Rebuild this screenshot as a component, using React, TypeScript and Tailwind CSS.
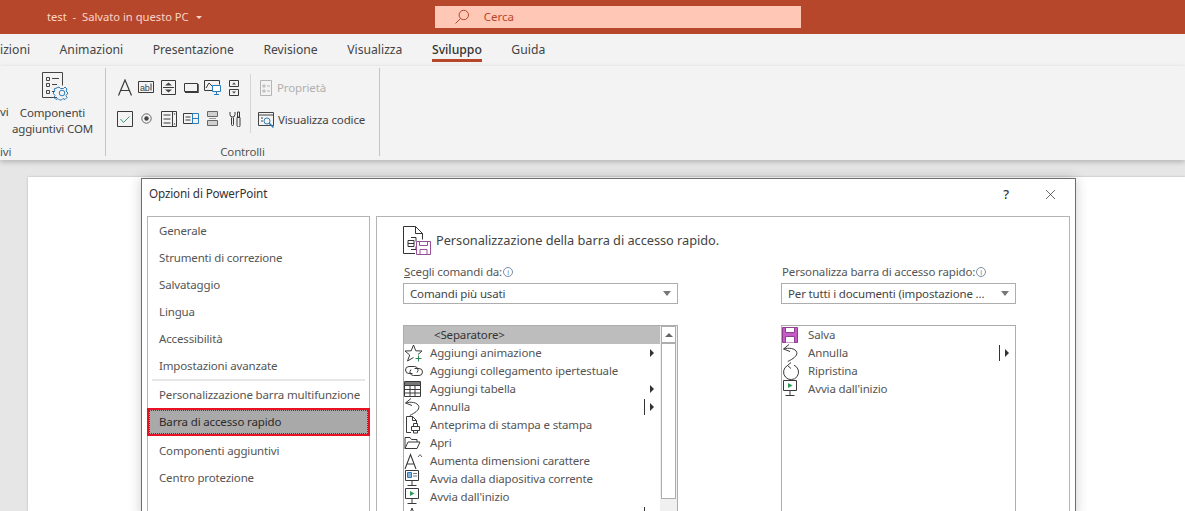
import type { ReactNode } from "react";
import { X } from "lucide-react";

const tabs = ["izioni", "Animazioni", "Presentazione", "Revisione", "Visualizza", "Sviluppo", "Guida"];

const navTop = ["Generale", "Strumenti di correzione", "Salvataggio", "Lingua", "Accessibilità", "Impostazioni avanzate"];

function Svg({ w, h, children }: { w: number; h: number; children: ReactNode }) {
  return (
    <svg width={w} height={h} viewBox={`0 0 ${w} ${h}`} fill="none" stroke="#3a3a3a" strokeWidth="1" className="block shrink-0">
      {children}
    </svg>
  );
}

function SaveIcon({ filled }: { filled?: boolean }) {
  return (
    <Svg w={16} h={16}>
      <path d="M.5.5h15v15H.5z" fill={filled ? "#c55cc5" : "#fff"} stroke="#8e3f8e" />
      <path d="M3.500.5h9v5h-9zM3.500 15.500v-6h9v6" fill="#fff" stroke="#8e3f8e" />
    </Svg>
  );
}

function StarIcon() {
  return (
    <Svg w={20} h={18}>
      <path d="M14 10.500L18 7l-6.200-.2L9.500 1 7.200 6.800 1 7l4.700 4L3.500 17l6-3.500" />
      <path d="M14.500 11.500v6M11.500 14.500h6" stroke="#2e8b57" />
    </Svg>
  );
}

function LinkIcon() {
  return (
    <Svg w={20} h={18}>
      <path d="M8.500 11.500H5a3.500 3.500 0 0 1 0-7h5.500a3.500 3.500 0 0 1 2.500 6" />
      <path d="M10.500 6.500H15a3.500 3.500 0 0 1 0 7H9.500a3.500 3.500 0 0 1-2.500-6" />
    </Svg>
  );
}

function TableIcon() {
  return (
    <Svg w={18} h={16}>
      <path d="M.5.500h16v15H.5z" />
      <path d="M1 1h15v3H1z" fill="#777" stroke="none" />
      <path d="M.5 4.500h16M.5 8.500h16M.5 12h16M6 4v11M11 4v11" />
    </Svg>
  );
}

function UndoIcon() {
  return (
    <Svg w={17} h={18}>
      <path d="M7 .5L1.500 5 8 7.500" />
      <path d="M1.800 5c4.500-1.500 12-.8 13 3.500.7 3.500-4 6.500-9 9" />
    </Svg>
  );
}

function RedoIcon() {
  return (
    <Svg w={17} h={18}>
      <path d="M9 .5L5.500 3.500 9 6.500" />
      <path d="M5.500 3.500a7.500 7.500 0 1 0 6.500-.3" />
    </Svg>
  );
}

function PrintIcon() {
  return (
    <Svg w={17} h={18}>
      <path d="M7 16.500H2.500V.5h6l4 4v3M8.500.5v4h4" />
      <path d="M7.500 10.500h8v4h-8zM9.500 10.500v-3h4v3M9.500 14.500v2.500h4v-2.500" fill="#fff" />
    </Svg>
  );
}

function FolderIcon() {
  return (
    <Svg w={17} h={16}>
      <path d="M1 13.500V2.500h5l1.500 2H13v2.500" />
      <path d="M1 13.500L4 7h12l-3 6.500z" />
    </Svg>
  );
}

function GrowIcon() {
  return (
    <Svg w={20} h={18}>
      <path d="M1 17L6.500 2.500 12 17M3 12h7" strokeWidth="1.100" />
      <path d="M14 5l2-2.500L18 5" stroke="#666" />
    </Svg>
  );
}

function SlideIcon({ from }: { from?: boolean }) {
  return (
    <Svg w={17} h={18}>
      <path d="M1.500.500h13v10h-13z" />
      <path d="M8 10.500v5M3.500 15.500h9" />
      {from ? (
        <path d="M6 3l4.500 2.500L6 8z" fill="#2e9b57" stroke="none" />
      ) : (
        <>
          <path d="M3.500 2.500h4v5h-4z" fill="#7fb3dc" stroke="#2b7cbb" />
          <path d="M9 3.500h4M9 6h4" stroke="#777" />
        </>
      )}
    </Svg>
  );
}

function FontIcon() {
  return (
    <Svg w={17} h={18}>
      <path d="M2 17L8 2l6 15M4 12h8" />
    </Svg>
  );
}

function Marker({ line, arrow }: { line?: boolean; arrow?: boolean }) {
  return (
    <div className="ml-auto flex h-[18px] w-[16px] shrink-0 items-center">
      <span className={line ? "h-[16px] w-px bg-[#333]" : "h-[16px] w-px"} />
      {arrow && <span className="ml-[5px] h-0 w-0 border-y-[4px] border-l-[4px] border-y-transparent border-l-[#333]" />}
    </div>
  );
}

function Row({ icon, label, line, arrow }: { icon: ReactNode; label: string; line?: boolean; arrow?: boolean }) {
  return (
    <div className="flex h-[18px] items-center text-[#555]">
      <div className="flex h-[18px] w-[26px] shrink-0 items-center overflow-hidden">{icon}</div>
      <span className="whitespace-nowrap">{label}</span>
      {(line || arrow) && <Marker line={line} arrow={arrow} />}
    </div>
  );
}

function Info() {
  return (
    <span className="ml-px inline-flex h-[10px] w-[10px] items-center justify-center rounded-full border border-[#7a8ea3] text-[7px] leading-none tracking-normal text-[#5a7fa3]">
      i
    </span>
  );
}

function Arrow() {
  return <span className="ml-auto h-0 w-0 border-x-[4px] border-t-[5px] border-x-transparent border-t-[#777]" />;
}

function ControlIcons() {
  return (
    <div className="grid grid-cols-[22px_21px_23px_22px_21px_22px] grid-rows-[31px_31px] items-center justify-items-center">
      <Svg w={16} h={17}>
        <path d="M1.500 16.500L8 1l6.500 15.500M4 11.500h8" strokeWidth="1.200" />
      </Svg>
      <Svg w={17} h={13}>
        <path d="M.5.500h15v11H.5z" />
        <text x="2" y="9.500" fontSize="9" fill="#444" stroke="none" fontFamily="Liberation Sans, sans-serif">ab</text>
        <path d="M13 2.500v7" />
      </Svg>
      <Svg w={16} h={16}>
        <path d="M.5.500h14v14H.5zM2 7.500h11" />
        <path d="M4 5.500l3.500-3 3.500 3zM4 9.500l3.500 3 3.500-3z" fill="#444" stroke="none" />
      </Svg>
      <Svg w={15} h={10}>
        <path d="M.5.500h13v8H.5z" />
        <path d="M14 1v8.500H1" strokeWidth="1.500" />
      </Svg>
      <Svg w={18} h={16}>
        <path d="M9 10.500H.5V.5h15v4" />
        <path d="M2 8l3-5 3 3" />
        <path d="M8.500 5.500h8v6h-8zM12.500 11.500v3M10 14.500h5" stroke="#2b7cbb" fill="#fff" />
      </Svg>
      <Svg w={11} h={16}>
        <path d="M.5.500h9v6h-9zM.5 9.500h9v6h-9z" />
        <path d="M3 4.500l2-2 2 2zM3 11.500l2 2 2-2z" fill="#444" stroke="none" />
      </Svg>
      <Svg w={16} h={16}>
        <path d="M.5.500h15v15H.5z" />
        <path d="M3.500 8l3 3.500 6-6" stroke="#3d9c6b" />
      </Svg>
      <Svg w={11} h={11}>
        <circle cx="5.500" cy="5.500" r="4.700" stroke="#666" />
        <circle cx="5.500" cy="5.500" r="2.200" fill="#444" stroke="none" />
      </Svg>
      <Svg w={16} h={16}>
        <path d="M.5.500h15v15H.5zM11.500.5v15M2.500 4h7M2.500 8h7M2.500 12h7" />
        <path d="M12.500 2.500h2l-1 1.500zM12.500 13.500h2l-1-1.500z" fill="#444" stroke="none" />
      </Svg>
      <Svg w={16} h={11}>
        <path d="M.5.500h9v10H.5zM2.500 4h5M2.500 7h5" />
        <path d="M9.500.5h6v10h-6zM9.500 5.500h6" stroke="#2b7cbb" />
      </Svg>
      <Svg w={12} h={15}>
        <path d="M.5.500h10v5H.5z" fill="#d0d0d0" stroke="#666" />
        <path d="M.5 9.500h10v5H.5z" fill="#d0d0d0" stroke="#666" />
        <path d="M2 7.500h7" stroke="#999" />
      </Svg>
      <Svg w={13} h={16}>
        <path d="M3.500 6.500v7a1 1 0 0 0 2 0v-7M2 1v2.500a2.500 2.500 0 0 0 5 0V1" />
        <path d="M9.500 1h2v5h-2zM9 6.500h3v8a1.500 1.500 0 0 1-3 0z" />
      </Svg>
    </div>
  );
}

function Group({ className, label, children }: { className: string; label: ReactNode; children: ReactNode }) {
  return (
    <div className={`${className} flex h-[88px] shrink-0 flex-col border-r border-[#c4c4c4]`}>
      <div className="h-[79px]">{children}</div>
      <div className="text-center leading-[9px] text-[#555]">{label}</div>
    </div>
  );
}

export default function App() {
  return (
    <div className="relative flex h-[511px] w-[1185px] flex-col overflow-hidden bg-[#e6e6e6] font-['Noto_Sans',sans-serif] text-[11.5px] tracking-[-0.15px]">
      {/* title bar */}
      <div className="flex h-[34px] shrink-0 items-center bg-[#b7472a] text-[#fbd5c8]">
        <span className="ml-[47px] text-[11.2px] tracking-normal">test&nbsp; -&nbsp; Salvato in questo PC</span>
        <span className="ml-[7px] h-0 w-0 border-x-[3px] border-t-[3px] border-x-transparent border-t-[#fbd5c8]" />
        <div className="ml-[233px] flex h-[22px] w-[366px] items-center bg-[#ffc7b5] text-[#b7472a]">
          <svg width="16" height="16" viewBox="0 0 16 16" fill="none" stroke="#b7472a" strokeWidth="1" className="ml-[19px]">
            <circle cx="9.800" cy="6" r="4.700" />
            <path d="M6.500 9.500L1.500 14.500" />
          </svg>
          <span className="ml-[14px] tracking-normal">Cerca</span>
        </div>
      </div>

      {/* tabs */}
      <div className="flex h-[32px] shrink-0 items-start gap-[29.500px] bg-[#f3f3f3] pt-[7px] text-[12.2px] tracking-normal text-[#444]">
        {tabs.map((t) => (
          <div key={t} className={t === "Sviluppo" ? "border-b-[3px] border-[#b7472a] font-medium text-[#333]" : ""}>
            {t}
          </div>
        ))}
      </div>

      {/* ribbon */}
      <div className="flex h-[94px] shrink-0 items-start bg-[#f3f3f3] pt-[2px] shadow-[0_2px_5px_rgba(0,0,0,0.22)]">
        <Group className="w-[106px]" label={<span className="-ml-[4px] block text-left">tivi</span>}>
          <div className="relative flex flex-col items-center pt-[3px] text-center leading-[16px] text-[#444]">
            <svg width="30" height="30" viewBox="0 0 30 30" fill="none" stroke="#444" className="ml-[7px]">
              <path d="M16 26.500H1.500V1.500h20v13" />
              <path d="M5.500 6.500h3v3h-3zM5.500 12.500h3v3h-3zM5.500 19.500h3v3h-3zM11 7.500h7M11 13.500h5M11 20.500h3" />
              <circle cx="21" cy="22" r="2.800" stroke="#2b7cbb" />
              <path d="M18 16l1.500 1.500h3L24 16l2 2-1 2 2 2-2 2.500 1 2-2 2-2-1-1.500 1.500h-2l-1.500-1.500-2 1-2-2 1-2-2-2.500 2-2-1-2z" stroke="#2b7cbb" fill="none" />
            </svg>
            <span className="absolute left-0 top-[36px]">vi</span>
            <span className="mt-[4px] whitespace-nowrap">Componenti</span>
            <span className="whitespace-nowrap">aggiuntivi COM</span>
          </div>
        </Group>
        <Group className="w-[274px]" label="Controlli">
          <div className="flex h-full items-start pl-[8px] pt-[4px]">
            <ControlIcons />
            <div className="ml-[5px] mt-[2px] h-[59px] w-px bg-[#d4d4d4]" />
            <div className="ml-[7px] flex flex-col">
              <div className="flex h-[32px] items-center gap-[5px] pl-[2px] text-[#b0b0b0]">
                <svg width="12" height="16" viewBox="0 0 12 16" fill="none" stroke="#b5b5b5">
                  <path d="M.5.500h11v15H.5zM3 5h2v2H3zM7 6h3M3 10h2v2H3zM7 11h3" />
                </svg>
                <span>Proprietà</span>
              </div>
              <div className="flex h-[32px] items-center gap-[3px] text-[#444]">
                <svg width="17" height="17" viewBox="0 0 17 17" fill="none" stroke="#444">
                  <path d="M.5.500h15v13H.5zM.5 3h15" />
                  <circle cx="9" cy="9" r="3" stroke="#2b7cbb" />
                  <path d="M11 11l4.500 4.500" stroke="#2b7cbb" strokeWidth="1.500" />
                  <path d="M3 6h2M3 9h2" />
                </svg>
                <span className="whitespace-nowrap">Visualizza codice</span>
              </div>
            </div>
          </div>
        </Group>
      </div>

      {/* slide area */}
      <div className="relative flex-1 pl-[28px] pt-[17px]">
        <div className="h-full bg-white shadow-[0_0_2px_rgba(0,0,0,0.25)]" />

        {/* dialog */}
        <div className="absolute left-[141px] top-[18px] h-[340px] w-[935px] border border-[#6e6e6e] bg-white shadow-[0_0_12px_rgba(0,0,0,0.2)]">
          <div className="flex h-[37px] items-start pl-[7px] pr-[16px] pt-[6px] text-[#333]">
            <span className="text-[11.7px]">Opzioni di PowerPoint</span>
            <span className="ml-auto mr-[3px] text-[13px] font-medium">?</span>
            <X size={17} strokeWidth={1} color="#333" className="ml-[30px] mt-px" />
          </div>

          <div className="flex h-[300px] gap-[6px] px-[5px]">
            {/* left nav */}
            <div className="w-[223px] shrink-0 border border-[#b4b4b4] text-[#555]">
              {navTop.map((n) => (
                <div key={n} className="flex h-[27px] items-center pl-[11px]">{n}</div>
              ))}
              <div className="mx-[4px] h-[2px] bg-[#e6e6e6]" />
              <div className="flex h-[27px] items-center whitespace-nowrap pl-[11px]">Personalizzazione barra multifunzione</div>
              <div className="-mx-px h-[28px] border-2 border-[#e81123]">
                <div className="flex h-full items-center border border-dotted border-[#444] bg-[#a9a9a9] pl-[9px] text-[#2a2a2a]">
                  Barra di accesso rapido
                </div>
              </div>
              <div className="flex h-[28px] items-center pl-[11px] pt-[2px]">Componenti aggiuntivi</div>
              <div className="flex h-[27px] items-center pl-[11px]">Centro protezione</div>
            </div>

            {/* right panel */}
            <div className="flex-1 border border-[#b4b4b4] pl-[26px]">
              <div className="flex h-[44px] items-center pt-[3px]">
                <svg width="29" height="30" viewBox="0 0 29 30" fill="none" stroke="#333" className="shrink-0">
                  <path d="M12 27.500H.5V.5h12l7 7v6M12.500.5v7h7" />
                  <path d="M5 14.500h6v6H5zM8 11.500h5v4M8 23.500h5v-3M5 17.500h6" />
                  <path d="M13.500 15.500h14v13h-14z" stroke="#9a4f9a" fill="#fff" />
                  <path d="M16.500 15.500v4h8v-4M17 28.500v-5h7v5" stroke="#9a4f9a" />
                </svg>
                <span className="ml-[4px] text-[12.8px] tracking-[-0.05px] text-[#444]">Personalizzazione della barra di accesso rapido.</span>
              </div>

              <div className="flex items-start">
                <div className="w-[275px] shrink-0">
                  <div className="flex h-[22px] items-center pl-px text-[#555]">
                    <span><span className="underline">S</span>cegli comandi da:</span>
                    <Info />
                  </div>
                  <div className="flex h-[21px] items-center border border-[#adadad] pl-[6px] pr-[6px] text-[#444]">
                    Comandi più usati
                    <Arrow />
                  </div>
                  <div className="mt-[21px] h-[200px] border border-[#adadad]">
                    <div className="flex h-full">
                      <div className="flex-1">
                        <div className="flex h-[18px] items-center bg-[#bdbdbd] pl-[30px] text-[#333]">&lt;Separatore&gt;</div>
                        <Row icon={<StarIcon />} label="Aggiungi animazione" arrow />
                        <Row icon={<LinkIcon />} label="Aggiungi collegamento ipertestuale" />
                        <Row icon={<TableIcon />} label="Aggiungi tabella" arrow />
                        <Row icon={<UndoIcon />} label="Annulla" line arrow />
                        <Row icon={<PrintIcon />} label="Anteprima di stampa e stampa" />
                        <Row icon={<FolderIcon />} label="Apri" />
                        <Row icon={<GrowIcon />} label="Aumenta dimensioni carattere" />
                        <Row icon={<SlideIcon />} label="Avvia dalla diapositiva corrente" />
                        <Row icon={<SlideIcon from />} label="Avvia dall'inizio" />
                        <Row icon={<FontIcon />} label="Carattere" line />
                      </div>
                      {/* scrollbar */}
                      <div className="flex w-[17px] shrink-0 flex-col items-center bg-[#f0f0f0]">
                        <div className="flex h-[17px] w-[15px] items-center justify-center border border-[#adadad] bg-white">
                          <span className="h-0 w-0 border-x-[4px] border-b-[4px] border-x-transparent border-b-[#666]" />
                        </div>
                        <div className="h-[156px] w-[15px] border border-[#adadad] bg-white" />
                      </div>
                    </div>
                  </div>
                </div>

                <div className="ml-[103px] w-[235px] shrink-0">
                  <div className="flex h-[22px] items-center pl-px text-[#555]">
                    <span>Personalizza barra di accesso rapido:</span>
                    <Info />
                  </div>
                  <div className="flex h-[21px] items-center border border-[#adadad] pl-[6px] pr-[6px] text-[#444]">
                    <span className="whitespace-nowrap">Per tutti i documenti (impostazione ...</span>
                    <Arrow />
                  </div>
                  <div className="mt-[21px] h-[200px] border border-[#adadad]">
                    <Row icon={<SaveIcon filled />} label="Salva" />
                    <Row icon={<UndoIcon />} label="Annulla" line arrow />
                    <Row icon={<RedoIcon />} label="Ripristina" />
                    <Row icon={<SlideIcon from />} label="Avvia dall'inizio" />
                  </div>
                </div>
              </div>
            </div>
          </div>
        </div>
      </div>
    </div>
  );
}
